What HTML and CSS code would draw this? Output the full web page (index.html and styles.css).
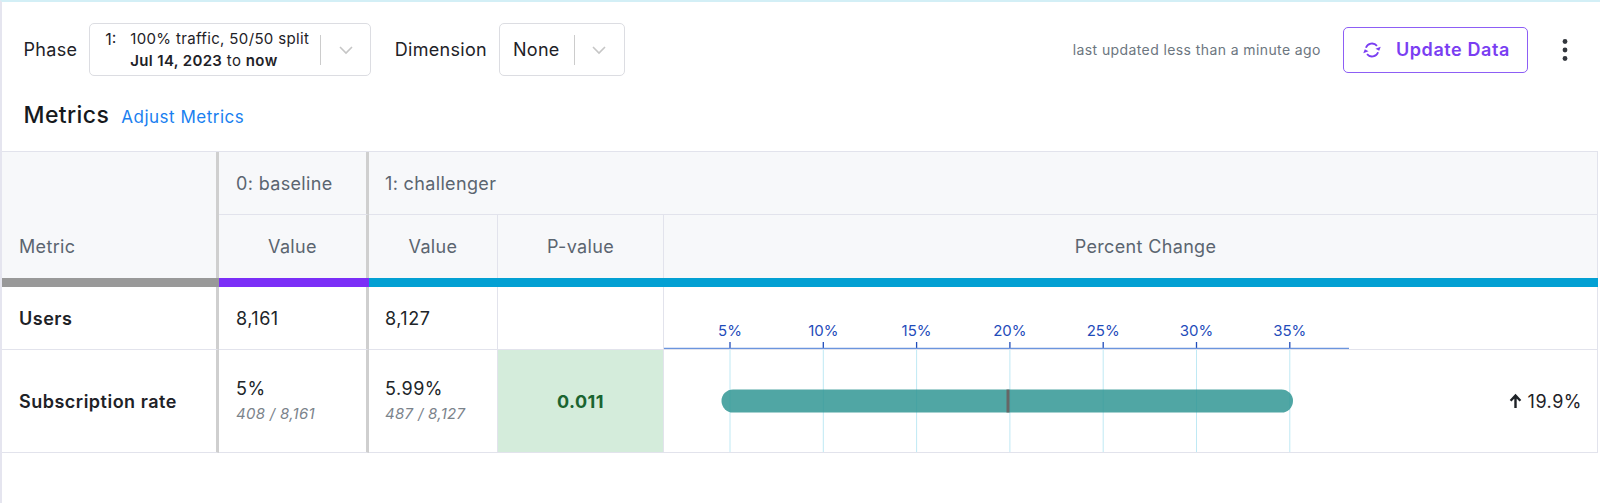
FILE: index.html
```html
<!DOCTYPE html>
<html lang="en">
<head>
<meta charset="utf-8">
<title>Experiment results</title>
<link rel="stylesheet" href="styles.css">
</head>
<body>
<div class="page">
  <div class="toolbar">
    <div class="field">
      <span class="field-label">Phase</span>
      <div class="select select-phase">
        <div class="select-value phase-value">
          <span class="phase-num">1:</span>
          <div class="phase-text">
            <div class="phase-line">100% traffic, 50/50 split</div>
            <div class="phase-line"><b>Jul 14, 2023</b> to <b>now</b></div>
          </div>
        </div>
        <span class="sep"></span>
        <span class="chev"><svg width="16" height="10" viewBox="0 0 16 10"><polyline points="2,2 8,8 14,2" fill="none" stroke="#c6c6c6" stroke-width="1.6"/></svg></span>
      </div>
    </div>
    <div class="field field-dim">
      <span class="field-label">Dimension</span>
      <div class="select select-dim">
        <div class="select-value dim-value">None</div>
        <span class="sep"></span>
        <span class="chev"><svg width="16" height="10" viewBox="0 0 16 10"><polyline points="2,2 8,8 14,2" fill="none" stroke="#c6c6c6" stroke-width="1.6"/></svg></span>
      </div>
    </div>
    <div class="spacer"></div>
    <span class="updated">last updated less than a minute ago</span>
    <button class="update-btn" type="button">
      <svg width="20" height="20" viewBox="0 0 20 20" fill="none" stroke="#7a3ef2" stroke-width="1.8">
        <path d="M3.89 7.78 A6.5 6.5 0 0 1 14.98 5.82"/>
        <polygon points="18.74,6.82 13.48,8.74 17.2,10.79" fill="#7a3ef2" stroke="none"/>
        <path d="M16.11 12.22 A6.5 6.5 0 0 1 5.02 14.18"/>
        <polygon points="1.26,13.18 6.52,11.26 2.8,9.21" fill="#7a3ef2" stroke="none"/>
      </svg>
      <span>Update Data</span>
    </button>
    <button class="kebab" type="button" aria-label="More">
      <svg width="8" height="24" viewBox="0 0 8 24"><circle cx="4" cy="3.5" r="2.4" fill="#33373d"/><circle cx="4" cy="12" r="2.4" fill="#33373d"/><circle cx="4" cy="20.5" r="2.4" fill="#33373d"/></svg>
    </button>
  </div>

  <div class="metrics-head">
    <h2>Metrics</h2>
    <a class="adjust" href="#">Adjust Metrics</a>
  </div>

  <table class="results">
    <colgroup>
      <col class="c-metric"><col class="c-base"><col class="c-val"><col class="c-p"><col class="c-chart">
    </colgroup>
    <thead>
      <tr class="hr1">
        <th class="hd metric-hd thick" rowspan="2">Metric</th>
        <th class="hd var-hd thick">0: baseline</th>
        <th class="hd var-hd" colspan="3">1: challenger</th>
      </tr>
      <tr class="hr2">
        <th class="hd center thick nob">Value</th>
        <th class="hd center nob">Value</th>
        <th class="hd center nob">P-value</th>
        <th class="hd center nob pc-hd">Percent Change</th>
      </tr>
      <tr class="color-row">
        <td class="cbar gray"></td>
        <td class="cbar purple"></td>
        <td class="cbar blue" colspan="3"></td>
      </tr>
    </thead>
    <tbody>
      <tr class="row-users">
        <td class="name thick">Users</td>
        <td class="val thick">8,161</td>
        <td class="val">8,127</td>
        <td class="pval"></td>
        <td class="chart">
          <div class="chart-wrap">
            <svg class="axis" width="700" height="62" viewBox="0 0 700 62">
              <g font-family="Inter, 'Liberation Sans', sans-serif" font-size="15" fill="#1f4cba" text-anchor="middle">
                <text x="66" y="48.5">5%</text>
                <text x="159.3" y="48.5">10%</text>
                <text x="252.6" y="48.5">15%</text>
                <text x="345.9" y="48.5">20%</text>
                <text x="439.2" y="48.5">25%</text>
                <text x="532.5" y="48.5">30%</text>
                <text x="625.8" y="48.5">35%</text>
              </g>
              <g stroke="#1f4cba" stroke-width="1.3">
                <line x1="66" y1="55" x2="66" y2="61"/>
                <line x1="159.3" y1="55" x2="159.3" y2="61"/>
                <line x1="252.6" y1="55" x2="252.6" y2="61"/>
                <line x1="345.9" y1="55" x2="345.9" y2="61"/>
                <line x1="439.2" y1="55" x2="439.2" y2="61"/>
                <line x1="532.5" y1="55" x2="532.5" y2="61"/>
                <line x1="625.8" y1="55" x2="625.8" y2="61"/>
              </g>
              <line x1="0" y1="61.4" x2="685" y2="61.4" stroke="#6b95de" stroke-width="1.3"/>
            </svg>
          </div>
        </td>
      </tr>
      <tr class="row-sub">
        <td class="name thick">Subscription rate</td>
        <td class="val thick"><div class="main-num">5%</div><div class="frac">408 / 8,161</div></td>
        <td class="val"><div class="main-num">5.99%</div><div class="frac">487 / 8,127</div></td>
        <td class="pval sig">0.011</td>
        <td class="chart">
          <div class="chart-wrap">
            <svg class="bars" width="700" height="102" viewBox="0 0 700 102">
              <g stroke="#bfe9f4" stroke-width="1">
                <line x1="66" y1="0" x2="66" y2="102"/>
                <line x1="159.3" y1="0" x2="159.3" y2="102"/>
                <line x1="252.6" y1="0" x2="252.6" y2="102"/>
                <line x1="345.9" y1="0" x2="345.9" y2="102"/>
                <line x1="439.2" y1="0" x2="439.2" y2="102"/>
                <line x1="532.5" y1="0" x2="532.5" y2="102"/>
                <line x1="625.8" y1="0" x2="625.8" y2="102"/>
              </g>
              <rect x="57.5" y="39.5" width="571.5" height="23" rx="11.5" fill="#2f9593" fill-opacity="0.84"/>
              <rect x="342.5" y="39.5" width="3" height="23" fill="#666666"/>
            </svg>
            <div class="change">
              <svg width="13" height="16" viewBox="0 0 13 16"><path d="M6.5 15 V3 M1.6 7.8 L6.5 2.6 L11.4 7.8" fill="none" stroke="#1e2227" stroke-width="2.4"/></svg>
              <span>19.9%</span>
            </div>
          </div>
        </td>
      </tr>
    </tbody>
  </table>
</div>
</body>
</html>
```

FILE: styles.css
```css
* { box-sizing: border-box; }

body {
  margin: 0;
  font-family: Inter, "Liberation Sans", sans-serif;
  color: #1e2227;
  background: #fff;
}

.page {
  width: 1600px;
  height: 503px;
  border-top: 2px solid #d3eff6;
  border-left: 2px solid #e5e5ef;
  overflow: hidden;
}

/* toolbar */
.toolbar {
  display: flex;
  align-items: center;
  height: 53px;
  margin-top: 21px;
  padding: 0 25px 0 21.5px;
}

.field {
  display: flex;
  align-items: center;
}

.field-dim { margin-left: 23.5px; }

.field-label {
  font-size: 18px;
  letter-spacing: 0.3px;
  margin-right: 12px;
  color: #1e2227;
}

.select {
  display: flex;
  align-items: center;
  height: 53px;
  border: 1px solid #dcdde2;
  border-radius: 5px;
  background: #fff;
}

.select-phase { width: 282px; padding-left: 15px; }
.select-dim { width: 126px; padding-left: 13px; }

.select-value { flex: 1; }

.phase-value {
  display: flex;
  align-items: flex-start;
}

.phase-num {
  width: 25px;
  font-size: 16px;
  line-height: 22px;
}

.phase-line {
  font-size: 15px;
  letter-spacing: 0.35px;
  line-height: 22px;
  white-space: nowrap;
}

.phase-line b { font-weight: 600; }

.dim-value {
  font-size: 18px;
  letter-spacing: 0.3px;
}

.sep {
  width: 1px;
  height: 30px;
  background: #cccccc;
}

.chev {
  width: 49px;
  display: flex;
  justify-content: center;
  align-items: center;
}

.spacer { flex: 1; }

.updated {
  font-size: 14px;
  letter-spacing: 0.4px;
  color: #6c7680;
  margin-right: 22px;
}

.update-btn {
  display: flex;
  align-items: center;
  gap: 14px;
  height: 46px;
  padding: 0 17px 0 18px;
  border: 1.5px solid #8d5ef5;
  border-radius: 5px;
  background: #fff;
  color: #7a3ef2;
  font-family: Inter, "Liberation Sans", sans-serif;
  font-size: 18px;
  letter-spacing: 0.6px;
  font-weight: 600;
}

.kebab {
  width: 20px;
  height: 30px;
  margin-left: 27px;
  padding: 0;
  border: none;
  background: none;
  display: flex;
  align-items: center;
  justify-content: center;
}

/* metrics heading */
.metrics-head {
  display: flex;
  align-items: baseline;
  gap: 12px;
  height: 27px;
  line-height: 27px;
  margin-top: 26px;
  padding-left: 21.5px;
}

.metrics-head h2 {
  margin: 0;
  font-size: 23px;
  letter-spacing: 0.4px;
  font-weight: 500;
  color: #16191d;
}

.adjust {
  font-size: 17px;
  letter-spacing: 0.5px;
  color: #1a7ff0;
  text-decoration: none;
}

/* table */
.results {
  margin-top: 22px;
  width: 1596px;
  table-layout: fixed;
  border-collapse: separate;
  border-spacing: 0;
  border-top: 1px solid #e2e3ec;
}

.c-metric { width: 217px; }
.c-base { width: 150px; }
.c-val { width: 129px; }
.c-p { width: 166px; }
.c-chart { width: 934px; }

.results th,
.results td {
  padding: 0;
  border-right: 1px solid #e2e3ec;
  border-bottom: 1px solid #e2e3ec;
  text-align: left;
}

.results .thick { border-right: 3px solid #cfcfcf; }
.results .nob { border-bottom: none; }

.hd {
  background: #f7f8fa;
  font-size: 18px;
  letter-spacing: 0.35px;
  font-weight: 400;
  color: #5b6570;
}

.hr1 th { height: 63px; }
.hr2 th { height: 63px; }

.metric-hd {
  vertical-align: bottom;
  padding: 0 0 20px 17px !important;
  line-height: 22px;
  border-bottom: none !important;
}

.var-hd { padding-left: 17px !important; }
.var-hd + .var-hd { padding-left: 16px !important; }

.results .center { text-align: center; }
.results .pc-hd { padding-left: 30px; }

.color-row td {
  height: 9px;
  border: none;
}

.cbar.gray { background: #999999; }
.cbar.purple { background: #7b2ff7; }
.cbar.blue { background: #03a0d3; }

.row-users td { height: 63px; }
.row-sub td { height: 103px; }

.name {
  padding-left: 17px !important;
  font-size: 18px;
  letter-spacing: 0.5px;
  font-weight: 600;
  color: #1e2227;
}

.val {
  padding-left: 17px !important;
  font-size: 18px;
  letter-spacing: 0.5px;
  color: #212529;
}

.val + .val { padding-left: 16px !important; }

.main-num { line-height: 22px; }

.frac {
  margin-top: 4px;
  font-size: 15px;
  letter-spacing: 0.3px;
  line-height: 20px;
  font-style: italic;
  color: #7b838b;
}

.pval.sig {
  background: #d4ecdb;
  text-align: center;
  font-size: 18px;
  letter-spacing: 0.4px;
  font-weight: 700;
  color: #1a6430;
}

.results .chart { vertical-align: top; }

.chart-wrap {
  display: flex;
  align-items: center;
}

.axis, .bars { display: block; flex: none; }

.change {
  margin-left: auto;
  padding-right: 15px;
  display: flex;
  align-items: center;
  gap: 6px;
  font-size: 18px;
  letter-spacing: 0.5px;
  color: #1e2227;
}
```
